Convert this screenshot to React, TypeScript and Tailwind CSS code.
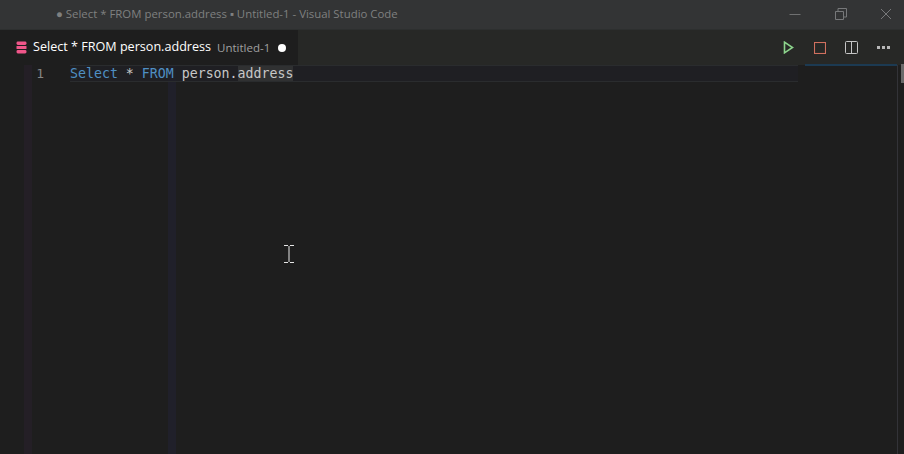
const mono = "font-['DejaVu_Sans_Mono','Liberation_Mono',monospace]";
const sans = "font-['Open_Sans','Noto_Sans',sans-serif]";

function DbIcon() {
  return (
    <svg width="11" height="13" viewBox="0 0 11 13" className="shrink-0">
      <rect x="0.5" y="0.5" width="10" height="3.4" rx="1.4" fill="#f0568a" />
      <rect x="0.5" y="4.9" width="10" height="3.2" rx="0.6" fill="#f0568a" />
      <rect x="0.5" y="9.1" width="10" height="3.4" rx="1.4" fill="#f0568a" />
    </svg>
  );
}

function WindowControls() {
  return (
    <div className="flex h-full items-center">
      <svg width="12" height="12" viewBox="0 0 12 12" className="mr-[34px]">
        <path d="M0.5 6.5H11.5" stroke="#6f7071" strokeWidth="1" />
      </svg>
      <svg width="12" height="12" viewBox="0 0 12 12" className="mr-[33px]">
        <path d="M0.5 3.5H8.5V11.5H0.5Z M3 3.5V0.5H11.5V9H8.5" fill="none" stroke="#77787a" strokeWidth="1" />
      </svg>
      <svg width="12" height="12" viewBox="0 0 12 12" className="mr-[12px]">
        <path d="M1 1L11 11M11 1L1 11" stroke="#77787a" strokeWidth="1" />
      </svg>
    </div>
  );
}

function TabActions() {
  return (
    <div className="flex items-center">
      <svg width="11" height="13" viewBox="0 0 11 13" className="mr-[20px]">
        <path d="M1.5 1.2L9.5 6.5L1.5 11.8Z" fill="none" stroke="#8cd48c" strokeWidth="1.6" />
      </svg>
      <svg width="12" height="12" viewBox="0 0 12 12" className="mr-[19px]">
        <rect x="0.5" y="0.5" width="11" height="11" fill="none" stroke="#d0705f" strokeWidth="1.1" />
      </svg>
      <svg width="13" height="13" viewBox="0 0 13 13" className="mr-[19px]">
        <path d="M0.5 1.5a1 1 0 0 1 1-1h10a1 1 0 0 1 1 1v10a1 1 0 0 1-1 1h-10a1 1 0 0 1-1-1ZM6.5 0.5V12.5" fill="none" stroke="#c5c5c5" strokeWidth="1" />
      </svg>
      <svg width="13" height="3" viewBox="0 0 13 3" className="mr-[14px]">
        <rect x="0" y="0" width="3" height="3" fill="#b8b8b8" />
        <rect x="5" y="0" width="3" height="3" fill="#b8b8b8" />
        <rect x="10" y="0" width="3" height="3" fill="#b8b8b8" />
      </svg>
    </div>
  );
}

export default function App() {
  return (
    <div className="flex h-[454px] w-[904px] flex-col overflow-hidden bg-[#1e1e1e]">
      <header className="flex h-[29px] shrink-0 items-center justify-between bg-[#333435] pb-[1px] pl-[56px]">
        <span className={`${sans} whitespace-nowrap text-[11.4px] text-[#7f8080]`}>
          ● Select * FROM person.address ▪ Untitled-1 - Visual Studio Code
        </span>
        <WindowControls />
      </header>

      <div className="flex h-[36px] shrink-0 items-center justify-between border-t border-[#2d2f2f] bg-[#272826]">
        <div className="flex h-full w-[298px] items-center bg-[#1e1e1e] pl-[16px]">
          <DbIcon />
          <span className={`${sans} ml-[6px] whitespace-nowrap text-[12.6px] text-white`}>
            Select * FROM person.address
          </span>
          <span className={`${sans} ml-[6px] whitespace-nowrap text-[11.5px] text-[#a0a0a0]`}>Untitled-1</span>
          <span className="ml-[8px] h-[8px] w-[8px] rounded-full bg-white" />
        </div>
        <TabActions />
      </div>

      <div className="relative flex min-h-0 flex-1">
        <div className="absolute bottom-0 left-[24px] top-0 w-[8px] bg-[#241f26]" />
        <div className="absolute bottom-0 left-[168px] top-0 w-[8px] bg-[#20202a]" />
        <div className="relative w-[70px] shrink-0">
          <div className={`${mono} pr-[26px] text-right text-[13px] leading-[17px] text-[#858585]`}>1</div>
        </div>
        <div className="relative min-w-0 flex-1">
          <div className={`${mono} mr-[106px] h-[17px] whitespace-pre border-y border-[#2a2c2e] bg-[#1f1f27]/60 text-[13.25px] leading-[15px]`}>
            <span className="text-[#4f8fc4]">Select</span>
            <span className="text-[#c8c8c8]"> * </span>
            <span className="text-[#4f8fc4]">FROM</span>
            <span className="text-[#c8c8c8]"> person.</span>
            <span className="bg-[#303132] text-[#c8c8c8]">address</span>
          </div>
        </div>
        <div className="absolute left-[805px] top-[-1px] h-[2px] w-[92px] bg-[#1c3a52]" />
        <div className="absolute bottom-0 left-[897px] top-0 w-px bg-[#333338]" />
        <div className="absolute right-0 top-[-1px] h-[19px] w-[3px] bg-[#6a6a6a]" />
        <svg width="12" height="18" viewBox="0 0 12 18" className="absolute left-[283px] top-[180px]">
          <path d="M1 0.5H5M7 0.5H11M6 1V17M1 17.5H5M7 17.5H11" stroke="#e6e6e6" strokeWidth="1" fill="none" />
        </svg>
      </div>
    </div>
  );
}
